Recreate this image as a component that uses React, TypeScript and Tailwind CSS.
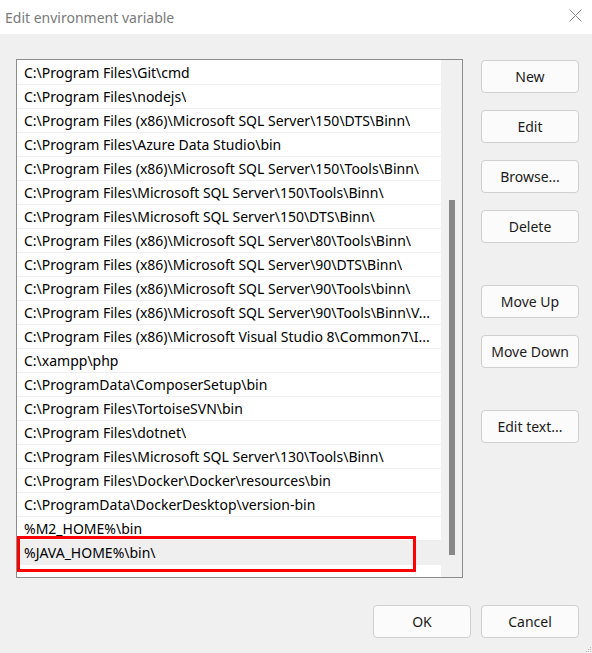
const PATHS = [
  "C:\\Program Files\\Git\\cmd",
  "C:\\Program Files\\nodejs\\",
  "C:\\Program Files (x86)\\Microsoft SQL Server\\150\\DTS\\Binn\\",
  "C:\\Program Files\\Azure Data Studio\\bin",
  "C:\\Program Files (x86)\\Microsoft SQL Server\\150\\Tools\\Binn\\",
  "C:\\Program Files\\Microsoft SQL Server\\150\\Tools\\Binn\\",
  "C:\\Program Files\\Microsoft SQL Server\\150\\DTS\\Binn\\",
  "C:\\Program Files (x86)\\Microsoft SQL Server\\80\\Tools\\Binn\\",
  "C:\\Program Files (x86)\\Microsoft SQL Server\\90\\DTS\\Binn\\",
  "C:\\Program Files (x86)\\Microsoft SQL Server\\90\\Tools\\binn\\",
  "C:\\Program Files (x86)\\Microsoft SQL Server\\90\\Tools\\Binn\\V...",
  "C:\\Program Files (x86)\\Microsoft Visual Studio 8\\Common7\\I...",
  "C:\\xampp\\php",
  "C:\\ProgramData\\ComposerSetup\\bin",
  "C:\\Program Files\\TortoiseSVN\\bin",
  "C:\\Program Files\\dotnet\\",
  "C:\\Program Files\\Microsoft SQL Server\\130\\Tools\\Binn\\",
  "C:\\Program Files\\Docker\\Docker\\resources\\bin",
  "C:\\ProgramData\\DockerDesktop\\version-bin",
  "%M2_HOME%\\bin",
  "%JAVA_HOME%\\bin\\",
];

const FONT = "font-['Segoe_UI','Noto_Sans','Open_Sans',sans-serif]";

function Btn({ label, className = "" }: { label: string; className?: string }) {
  return (
    <button
      className={`w-[98px] h-[33px] rounded-[4px] border border-[#cfcfcf] bg-[#fbfbfb] text-[14px] text-[#1b1b1b] ${className}`}
    >
      {label}
    </button>
  );
}

export default function App() {
  return (
    <div className={`w-[592px] h-[653px] flex flex-col bg-[#f0f0f0] ${FONT}`}>
      {/* Title bar */}
      <div className="h-[34px] bg-white flex items-center justify-between pl-[5px] pr-[10px]">
        <span className="text-[14px] text-[#7a7a7a]">Edit environment variable</span>
        <svg width="13" height="13" viewBox="0 0 13 13" aria-hidden="true" className="-mt-[3px]">
          <path d="M0.5 0.5L12.5 12.5M12.5 0.5L0.5 12.5" stroke="#8a8a8a" strokeWidth="1" />
        </svg>
      </div>

      <div className="relative flex-1 flex flex-col pl-[16px] pr-[13px] pt-[25px]">
        <div className="flex">
          {/* List */}
          <div className="w-[447px] h-[519px] border border-[#8c8c8c] bg-white flex">
            <div className="flex-1 flex flex-col pt-[1px] min-w-0">
              {PATHS.map((p, i) => {
                const selected = i === PATHS.length - 1;
                return (
                  <div
                    key={p}
                    className={`relative h-[24px] shrink-0 border-b border-[#efefef] pl-[7px] pr-[5px] flex items-center text-[14px] text-black whitespace-nowrap ${
                      selected ? "bg-[#efefef]" : ""
                    }`}
                  >
                    <span className="truncate">{p}</span>
                    {selected && (
                      <span className="absolute left-0 top-[-5px] w-[399px] h-[36px] border-[3px] border-[#ff0000] pointer-events-none" />
                    )}
                  </div>
                );
              })}
            </div>
            {/* Scrollbar */}
            <div className="w-[21px] bg-[#f0f0f0] flex flex-col items-center">
              <div className="mt-[140px] w-[6px] h-[355px] bg-[#888888]" />
            </div>
          </div>

          {/* Side buttons */}
          <div className="ml-[18px] pt-[1px] flex flex-col">
            <Btn label="New" />
            <Btn label="Edit" className="mt-[17px]" />
            <Btn label="Browse..." className="mt-[17px]" />
            <Btn label="Delete" className="mt-[17px]" />
            <Btn label="Move Up" className="mt-[42px]" />
            <Btn label="Move Down" className="mt-[17px]" />
            <Btn label="Edit text..." className="mt-[42px]" />
          </div>
        </div>

        {/* Footer */}
        <div className="mt-[27px] flex justify-end gap-[10px]">
          <Btn label="OK" />
          <Btn label="Cancel" />
        </div>

        {/* Resize grip */}
        <svg className="absolute right-0 bottom-0" width="6" height="6" viewBox="0 0 6 6">
          <rect x="4" y="0" width="1" height="1" fill="#b5b5b5" />
          <rect x="2" y="2" width="1" height="1" fill="#b5b5b5" />
          <rect x="4" y="2" width="1" height="1" fill="#b5b5b5" />
          <rect x="0" y="4" width="1" height="1" fill="#b5b5b5" />
          <rect x="2" y="4" width="1" height="1" fill="#b5b5b5" />
          <rect x="4" y="4" width="1" height="1" fill="#b5b5b5" />
        </svg>
      </div>
    </div>
  );
}
